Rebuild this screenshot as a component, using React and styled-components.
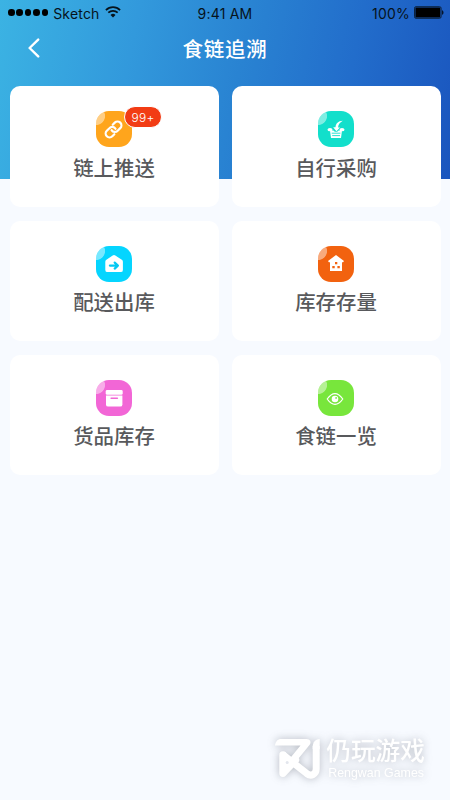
import React from 'react';
import styled, { createGlobalStyle } from 'styled-components';

const menuItems = [
  { id: 'push', label: '链上推送', color: '#ffa51c', badge: '99+', icon: <LinkIcon /> },
  { id: 'purchase', label: '自行采购', color: '#12dfcb', icon: <BasketIcon /> },
  { id: 'delivery', label: '配送出库', color: '#05d5ff', icon: <OutboundIcon /> },
  { id: 'stock', label: '库存存量', color: '#f2620f', icon: <StockIcon /> },
  { id: 'goods', label: '货品库存', color: '#f266d6', icon: <BoxIcon /> },
  { id: 'overview', label: '食链一览', color: '#78e63c', icon: <EyeIcon /> },
];

const App = () => {
  return (
    <Page>
      <GlobalStyle />
      <StatusBar>
        <Carrier>
          <SignalDots>
            {[0, 1, 2, 3, 4].map(dot => <Dot key={dot} />)}
          </SignalDots>
          <span>Sketch</span>
          <WifiIcon />
        </Carrier>
        <span>9:41 AM</span>
        <Battery>
          <span>100%</span>
          <BatteryIcon />
        </Battery>
      </StatusBar>

      <NavBar>
        <BackButton aria-label="返回">
          <svg width="14" height="20" viewBox="0 0 14 20" fill="none">
            <path d="M11.2 1.6 2.6 10l8.6 8.4" stroke="#fff" strokeWidth="2.4" strokeLinecap="round" strokeLinejoin="round" />
          </svg>
        </BackButton>
        <Title>食链追溯</Title>
      </NavBar>

      <MenuGrid>
        {menuItems.map(item => (
          <MenuCard key={item.id}>
            <IconTile color={item.color}>
              <TileFace>{item.icon}</TileFace>
              {item.badge && <Badge>{item.badge}</Badge>}
            </IconTile>
            <MenuLabel>{item.label}</MenuLabel>
          </MenuCard>
        ))}
      </MenuGrid>

      <Watermark>
        <WatermarkLogo />
        <WatermarkText>
          <WatermarkName>仍玩游戏</WatermarkName>
          <WatermarkSub>Rengwan Games</WatermarkSub>
        </WatermarkText>
      </Watermark>
    </Page>
  );
};

function WifiIcon() {
  return (
    <svg width="16" height="12" viewBox="0 0 16 12" fill="none" stroke="#06131b" strokeWidth="1.7">
      <path d="M.9 4.1a10.2 10.2 0 0 1 14.2 0" />
      <path d="M3.3 6.7a6.8 6.8 0 0 1 9.4 0" />
      <path d="M8 11.4 5.5 8.9a3.6 3.6 0 0 1 5 0z" fill="#06131b" stroke="none" />
    </svg>
  );
}

function BatteryIcon() {
  return (
    <svg width="30" height="13" viewBox="0 0 30 13">
      <rect x=".5" y=".7" width="26.6" height="11.6" rx="1.5" fill="none" stroke="#0b2340" />
      <rect x="1.4" y="1.6" width="24.8" height="9.8" rx=".5" fill="#000" />
      <path d="M28 4.2c2 .6 2 4 0 4.6z" fill="#06152b" />
    </svg>
  );
}

function LinkIcon() {
  return (
    <svg width="36" height="36" viewBox="0 0 36 36" fill="none">
      <g transform="translate(7.7 8.6) scale(0.82)" stroke="#fff" strokeWidth="2.7" strokeLinecap="round">
        <path d="M9.6 12.8a4.600 4.600 0 0 0 7.400.7l3.200-3.100a4.700 4.700 0 0 0-6.700-6.700l-2.500 2.500" />
        <path d="M14.400 11.200a4.600 4.600 0 0 0-7.400-.7l-3.200 3.100a4.700 4.700 0 0 0 6.700 6.700l2.500-2.500" />
      </g>
    </svg>
  );
}

function BasketIcon() {
  return (
    <svg width="36" height="36" viewBox="0 0 36 36">
      <path d="M24.8 9.8c-4.8.3-6.9 2.8-7.3 6.4h-2.3l3.2 4 3.6-3.6h-1.9c.1-2.7 1.5-5 4.7-6.8z" fill="#fff" />
      <ellipse cx="12" cy="18.7" rx="2.5" ry="1.6" fill="#fff" />
      <ellipse cx="24" cy="18.7" rx="2.5" ry="1.6" fill="#fff" />
      <path d="M12 19.6h3.4l1.4 1.2h2.4l1.4-1.2H24l-1 7.4H13z" fill="#fff" />
      <path d="M13.7 22.2h8.7M14.2 24.6h7.8" stroke="#12dfcb" strokeWidth=".9" />
    </svg>
  );
}

function OutboundIcon() {
  return (
    <svg width="36" height="36" viewBox="0 0 36 36">
      <path d="M16.7 9.6a2.2 2.2 0 0 1 2.6 0l6.5 4.2c.7.5 1.1 1.1 1.1 1.9v8.2a2.2 2.2 0 0 1-2.2 2.2H11.5a2.2 2.2 0 0 1-2.2-2.2v-8.2c0-.8.4-1.4 1.1-1.9z" fill="#fff" />
      <path d="M13.9 19.6h7.2M18.7 16.6l3.2 3-3.2 3" fill="none" stroke="#05c8f2" strokeWidth="2.2" strokeLinecap="round" strokeLinejoin="round" />
    </svg>
  );
}

function StockIcon() {
  return (
    <svg width="36" height="36" viewBox="0 0 36 36">
      <path d="m18 8.9 8 6.2-.9 1.2H24V25H12v-8.7h-1.1l-.9-1.2z" fill="#fff" />
      <path d="M17 16h2.3v2.2H17zM14.3 20.1h2.4v2.2h-2.4zM19.4 20.1h2.4v2.2h-2.4z" fill="#f2620f" />
    </svg>
  );
}

function BoxIcon() {
  return (
    <svg width="36" height="36" viewBox="0 0 36 36">
      <rect x="9.7" y="10" width="17" height="4.8" rx="1.4" fill="#fff" />
      <path d="M10 15.5h16.4v8.9a2.2 2.2 0 0 1-2.2 2.2h-12a2.2 2.2 0 0 1-2.2-2.2z" fill="#fff" />
      <path d="M15.1 18.2h6.3" stroke="#f266d6" strokeWidth="1.5" strokeLinecap="round" />
    </svg>
  );
}

function EyeIcon() {
  return (
    <svg width="36" height="36" viewBox="0 0 36 36">
      <path d="M9.2 19c5-7.2 10.6-7.2 15.6 0-5 7.2-10.6 7.2-15.6 0z" fill="none" stroke="#fff" strokeWidth="1.2" strokeLinejoin="round" />
      <circle cx="17" cy="19" r="3.3" fill="#fff" />
      <circle cx="18.1" cy="17.9" r=".9" fill="#78e63c" />
    </svg>
  );
}

function WatermarkLogo() {
  return (
    <svg width="46" height="42" viewBox="0 0 46 42" fill="none">
      <path d="M0 7.600C.6 3.400 2.600 1 6 1h25.500c3.800 0 5.200 3.400 3 6L14.500 31.500 9.500 27 25.500 7.600z" fill="#fff" />
      <path d="M8 17v18.300L20.500 22" stroke="#fff" strokeWidth="7.400" strokeLinecap="round" strokeLinejoin="round" />
      <path d="m8 16.800 23.800 18.800c4.300 3.200 9.400.8 9.400-4.800V8" stroke="#fff" strokeWidth="7" strokeLinejoin="round" />
      <path d="M37.700 9c0-4.500 2.200-7.500 7-8v10h-7z" fill="#fff" />
      <circle cx="12.200" cy="24.400" r="1.500" fill="#e3e6ed" />
    </svg>
  );
}

const GlobalStyle = createGlobalStyle`
  * {
    box-sizing: border-box;
  }

  body {
    margin: 0;
    font-family: Inter, "Noto Sans CJK SC", sans-serif;
  }
`;

const Page = styled.div`
  height: 800px;
  display: flex;
  flex-direction: column;
  overflow: hidden;
  background: linear-gradient(102deg, #3bb3e3 0%, #3299dc 29%, #2983d2 52%, #226dcb 75%, #1a55be 100%) top / 100% 179px no-repeat #f7faff;
`;

const StatusBar = styled.div`
  display: grid;
  grid-template-columns: 1fr auto 1fr;
  align-items: center;
  height: 27px;
  padding: 0 6px 0 8px;
  color: #06131b;
  font-size: 14px;
  letter-spacing: 0.2px;

  > span {
    margin-right: 2px;
  }
`;

const Carrier = styled.div`
  display: flex;
  align-items: center;
  gap: 5px;

  svg {
    margin-top: -4px;
  }
`;

const SignalDots = styled.div`
  display: flex;
  gap: 1.8px;
  margin-top: -2px;
`;

const Dot = styled.i`
  width: 6.6px;
  height: 6.6px;
  border-radius: 50%;
  background: #000;
`;

const Battery = styled.div`
  display: flex;
  align-items: center;
  justify-content: flex-end;
  gap: 4px;

  svg {
    margin-top: -3px;
  }
`;

const NavBar = styled.header`
  display: grid;
  grid-template-columns: 68px 1fr 68px;
  align-items: center;
  height: 42px;
  margin-bottom: 17px;
`;

const BackButton = styled.button`
  display: flex;
  padding: 0 0 0 27px;
  border: none;
  background: none;
  cursor: pointer;
`;

const Title = styled.h1`
  margin: 3px 0 0;
  color: #fff;
  font-size: 20.5px;
  font-weight: 500;
  line-height: 30px;
  letter-spacing: 0.8px;
  text-align: center;
`;

const MenuGrid = styled.main`
  display: grid;
  grid-template-columns: 1fr 1fr;
  grid-auto-rows: 120.3px;
  gap: 14px 13px;
  padding: 0 9.5px;
  margin-top: 0.3px;
`;

const MenuCard = styled.div`
  display: flex;
  flex-direction: column;
  align-items: center;
  padding-top: 25px;
  border-radius: 10px;
  background: #fff;
`;

const IconTile = styled.div`
  position: relative;
  width: 36px;
  height: 36px;
  border-radius: 13px;
  background: ${props => props.color};
`;

const TileFace = styled.div`
  height: 36px;
  border-radius: 13px;
  background: radial-gradient(circle at 0 5px, rgba(255, 255, 255, 0.46) 8.6px, transparent 9.4px);

  svg {
    display: block;
  }
`;

const Badge = styled.span`
  position: absolute;
  top: -5px;
  left: 28px;
  width: 38px;
  height: 22px;
  border: 1px solid #fff;
  border-radius: 11px;
  background: #f23c14;
  color: #fff;
  font-size: 12px;
  font-weight: 300;
  line-height: 21px;
  letter-spacing: 0.2px;
  text-align: center;
`;

const MenuLabel = styled.div`
  margin-top: 6.4px;
  color: #58595c;
  font-size: 20.4px;
  font-weight: 500;
  line-height: 30px;
`;

const Watermark = styled.footer`
  display: flex;
  justify-content: flex-end;
  align-items: flex-start;
  gap: 5px;
  margin-top: auto;
  padding: 0 25px 19px 0;
  color: #fff;
  filter: drop-shadow(0 0 4px rgba(70, 75, 90, 0.38));

  svg {
    margin-top: 1px;
  }
`;

const WatermarkText = styled.div`
  display: flex;
  flex-direction: column;
`;

const WatermarkName = styled.span`
  font-size: 24.7px;
  font-weight: 500;
  line-height: 29px;
`;

const WatermarkSub = styled.span`
  padding-left: 2px;
  font-family: "Liberation Sans", sans-serif;
  font-size: 12.4px;
  line-height: 15px;
`;

export default App;
